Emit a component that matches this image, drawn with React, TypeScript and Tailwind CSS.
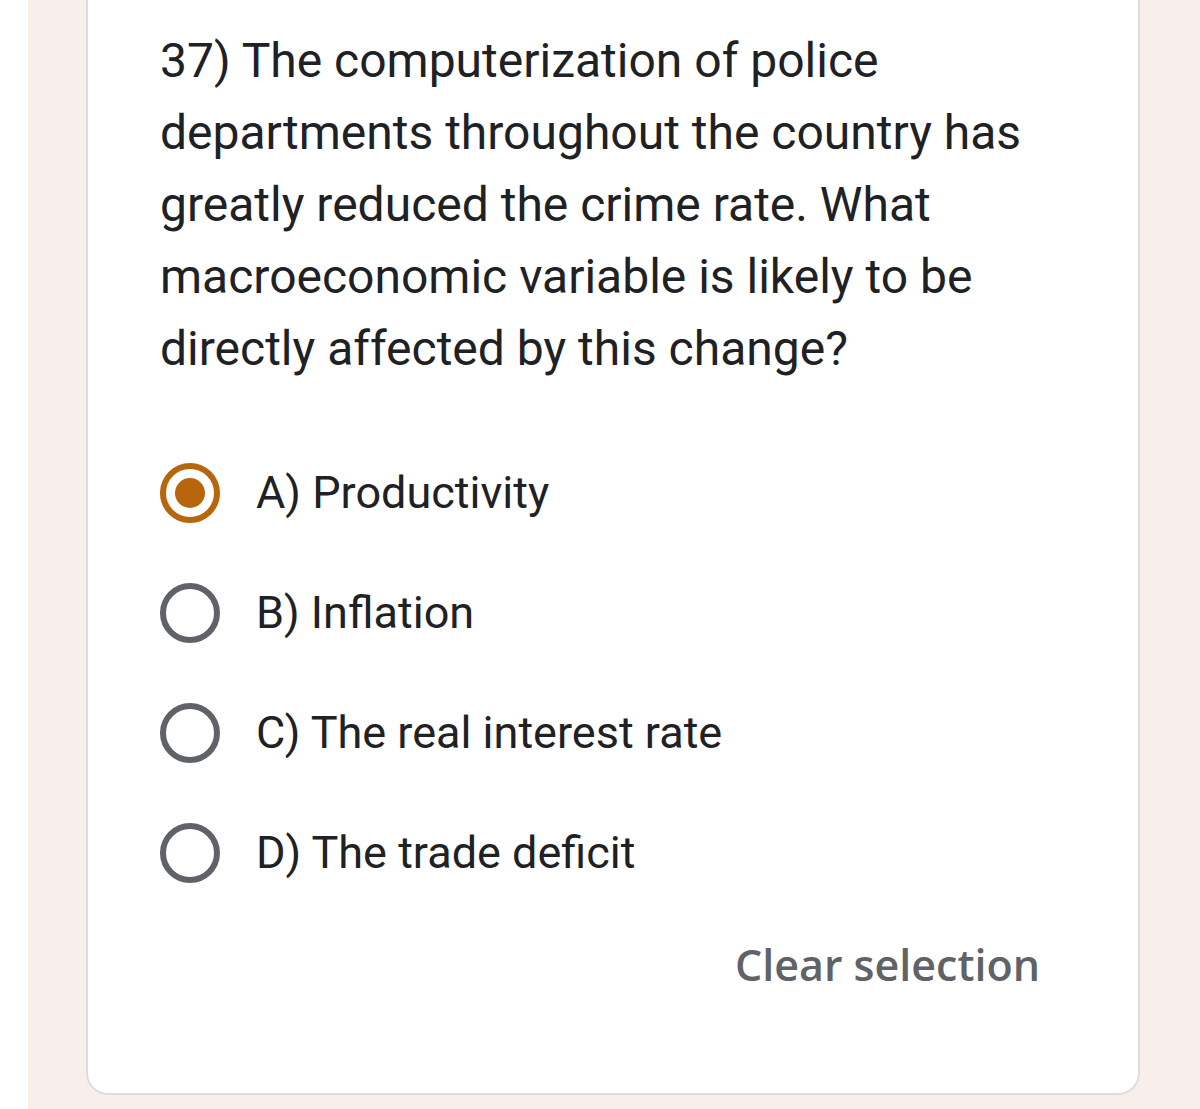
import React from 'react';

const options = ['A) Productivity', 'B) Inflation', 'C) The real interest rate', 'D) The trade deficit'];

const Radio = ({ checked }: { checked: boolean }) =>
  checked ? (
    <div className="flex h-[60px] w-[60px] items-center justify-center rounded-full border-[6px] border-[#b7660b]">
      <div className="h-[30px] w-[30px] rounded-full bg-[#b7660b]" />
    </div>
  ) : (
    <div className="h-[60px] w-[60px] rounded-full border-[6px] border-[#5f6368]" />
  );

export default function App() {
  return (
    <div className="flex h-[1109px] w-[1200px] overflow-hidden bg-white">
      <div className="w-[28px] shrink-0 bg-white" />
      <div className="flex flex-1 bg-[#f9efea] pl-[58px] pr-[60px] pb-[14px]">
        <div className="flex flex-1 flex-col rounded-b-[22px] border-x-2 border-b-2 border-[#dadce0] bg-white pl-[72px] pr-[98px]">
          <p
            className="mt-[25px] text-[48px] leading-[72px] text-[#202124]"
            style={{ fontFamily: 'Roboto, sans-serif' }}
          >
            37) The computerization of police departments throughout the country has greatly reduced the crime
            rate. What macroeconomic variable is likely to be directly affected by this change?
          </p>

          <div className="mt-[78px] flex flex-col gap-[60px]">
            {options.map((opt, i) => (
              <div key={opt} className="flex h-[60px] items-center gap-[36px]">
                <Radio checked={i === 0} />
                <span
                  className="text-[45px] leading-[60px] text-[#202124]"
                  style={{ fontFamily: 'Roboto, sans-serif' }}
                >
                  {opt}
                </span>
              </div>
            ))}
          </div>

          <div className="mt-[52px] flex justify-end">
            <span
              className="text-[43px] font-semibold leading-[60px] text-[#5f6368]"
              style={{ fontFamily: '"Open Sans", sans-serif' }}
            >
              Clear selection
            </span>
          </div>
        </div>
      </div>
    </div>
  );
}
